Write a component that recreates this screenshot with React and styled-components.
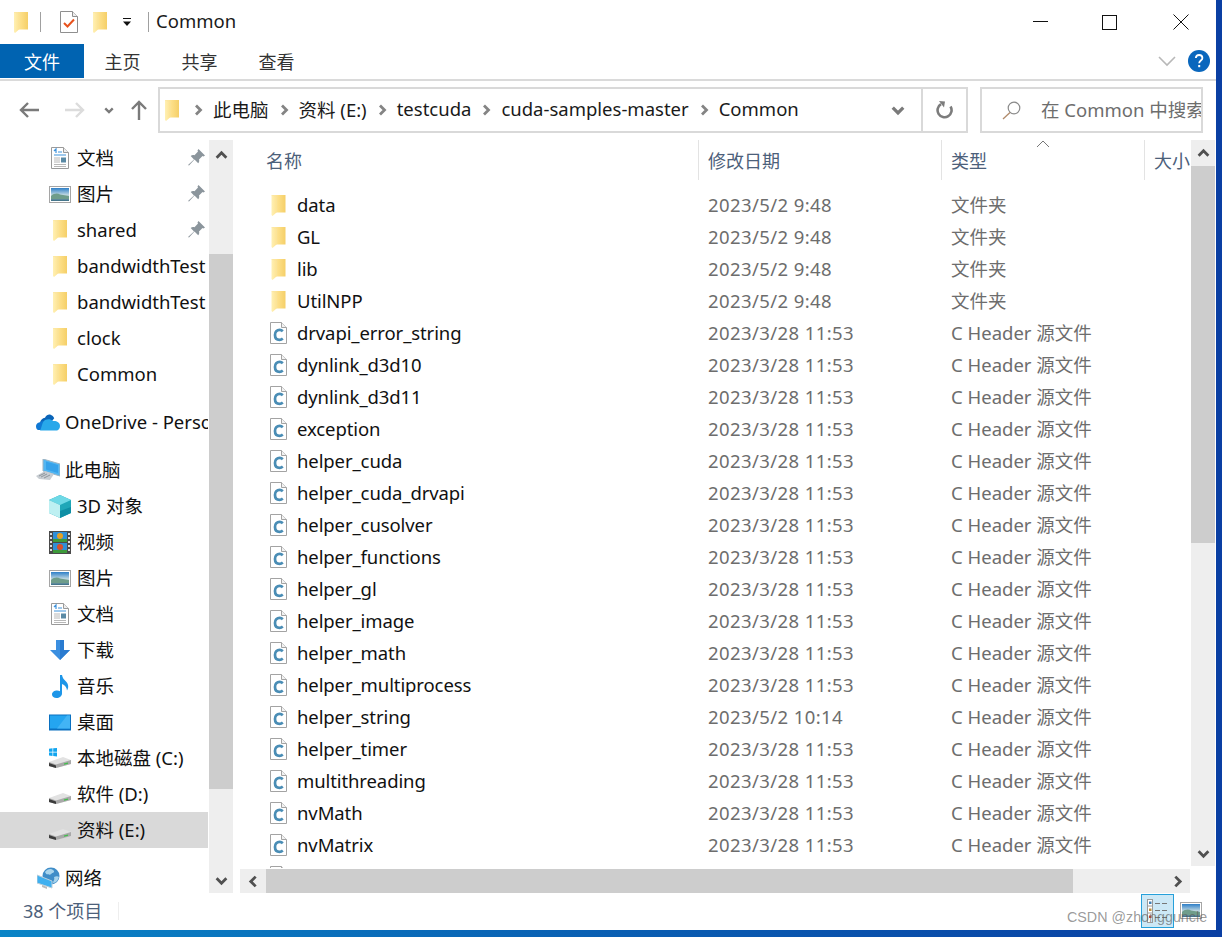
import React from "react";
import styled, { createGlobalStyle } from "styled-components";

const GlobalStyle = createGlobalStyle`
  html, body {
    margin: 0;
    padding: 0;
    background: #fff;
  }
  * {
    box-sizing: border-box;
  }
`;

const Screen = styled.div`
  position: relative;
  width: 1222px;
  height: 937px;
  overflow: hidden;
  display: flex;
  flex-direction: column;
  background: linear-gradient(90deg, #0a84c6 0%, #0a62b4 45%, #0a3fa3 100%);
  font-family: "Noto Sans", "Noto Sans CJK SC", sans-serif;
  font-size: 18.5px;
  color: #111;
`;

const Window = styled.div`
  width: 1216px;
  height: 930px;
  background: #fff;
  display: flex;
  flex-direction: column;
`;

const TitleBar = styled.div`
  height: 44px;
  flex: none;
  display: flex;
  align-items: center;
  padding-left: 14px;
`;

const TitleSep = styled.div`
  width: 1px;
  height: 20px;
  background: #a0a0a0;
  margin: 0 ${(p) => p.$right}px 0 ${(p) => p.$left}px;
`;

const Spacer = styled.span`
  flex: none;
  width: ${(p) => p.$w}px;
`;

const TitleText = styled.div`
  font-size: 18.5px;
  color: #1a1a1a;
  margin-bottom: 3px;
`;

const WinButtons = styled.div`
  margin-left: auto;
  display: flex;
  align-items: center;
`;

const WinButton = styled.div`
  width: ${(p) => p.$w}px;
  display: flex;
  justify-content: center;
  align-items: center;
`;

const RibbonTabs = styled.div`
  height: 37px;
  flex: none;
  display: flex;
  align-items: flex-start;
  border-bottom: 2px solid #dadada;
`;

const FileTab = styled.div`
  width: 84px;
  height: 34px;
  background: #0063b1;
  color: #fff;
  display: flex;
  align-items: center;
  justify-content: center;
  font-size: 18px;
`;

const Tab = styled.div`
  width: 77px;
  height: 34px;
  display: flex;
  align-items: center;
  justify-content: center;
  font-size: 18px;
  color: #333;
`;

const RibbonRight = styled.div`
  margin-left: auto;
  height: 34px;
  display: flex;
  align-items: center;
  gap: 12px;
  padding: 0 6px 0 0;
`;

const NavBar = styled.div`
  height: 46px;
  margin-top: 6px;
  flex: none;
  display: flex;
  align-items: center;
`;

const NavArrows = styled.div`
  width: 158px;
  flex: none;
  display: flex;
  align-items: center;
  padding-left: 19px;
`;

const AddressBox = styled.div`
  width: 810px;
  height: 46px;
  flex: none;
  border: 2px solid #d9d9d9;
  display: flex;
  align-items: center;
  padding-left: 5px;
`;

const Crumb = styled.span`
  color: #1a1a1a;
  white-space: nowrap;
  margin-bottom: 3px;
`;

const CrumbChevron = styled.span`
  display: flex;
  width: 30px;
  flex: none;
  justify-content: center;
  &:first-of-type {
    width: 34px;
    padding-left: 4px;
  }
`;

const AddressTail = styled.div`
  margin-left: auto;
  display: flex;
  height: 100%;
  align-items: center;
`;

const DropZone = styled.div`
  width: 46px;
  display: flex;
  justify-content: center;
`;

const RefreshZone = styled.div`
  width: 45px;
  height: 100%;
  border-left: 2px solid #d9d9d9;
  display: flex;
  align-items: center;
  justify-content: center;
`;

const SearchBox = styled.div`
  width: 223px;
  height: 46px;
  margin-left: 12px;
  border: 2px solid #d9d9d9;
  display: flex;
  align-items: center;
  padding-left: 20px;
  gap: 20px;
  overflow: hidden;
  white-space: nowrap;
  color: #6d6d6d;

  svg {
    flex: none;
  }
`;

const SearchHint = styled.span`
  margin-bottom: 2px;
  flex: none;
`;

const Body = styled.div`
  margin-top: 7px;
  height: 753px;
  flex: none;
  display: flex;
`;

const NavColumn = styled.div`
  width: 233px;
  flex: none;
  display: flex;
`;

const NavPane = styled.div`
  width: 208px;
  flex: none;
  overflow: hidden;
  margin-right: 1px;
`;

const NavRow = styled.div`
  position: relative;
  height: 36px;
  width: 208px;
  display: flex;
  align-items: center;
  white-space: nowrap;
  padding-left: ${(p) => (p.$top ? 36 : 49)}px;
  padding-bottom: 2px;
  gap: ${(p) => (p.$top ? 5 : 6)}px;
  margin-top: ${(p) => (p.$section ? 12 : 0)}px;
  background: ${(p) => (p.$selected ? "#d9d9d9" : "transparent")};
`;

const IconSlot = styled.span`
  width: ${(p) => (p.$top ? 24 : 22)}px;
  height: 24px;
  margin-top: 2px;
  flex: none;
  display: flex;
  align-items: center;
  justify-content: center;
`;

const PinSlot = styled.span`
  position: absolute;
  right: 3px;
  top: 9px;
  display: flex;
`;

const VScroll = styled.div`
  width: 24px;
  flex: none;
  height: ${(p) => p.$height}px;
  background: #eeeeee;
  display: flex;
  flex-direction: column;
`;

const ScrollThumb = styled.div`
  background: #cdcdcd;
  flex: none;
  height: ${(p) => p.$size}px;
`;

const ScrollEnd = styled.div`
  flex: none;
  height: ${(p) => p.$size}px;
  display: flex;
  align-items: ${(p) => p.$align || "center"};
  justify-content: center;
  padding: ${(p) => p.$pad || "0"};
`;

const ScrollGap = styled.div`
  flex: 1;
`;

const MainColumn = styled.div`
  margin-left: 7px;
  width: 976px;
  flex: none;
  display: flex;
  flex-direction: column;
`;

const MainTop = styled.div`
  display: flex;
  height: 729px;
  flex: none;
`;

const ListArea = styled.div`
  width: 951px;
  flex: none;
  height: 728px;
  overflow: hidden;
`;

const HeaderRow = styled.div`
  position: relative;
  height: 41px;
  margin-bottom: 8px;
  display: grid;
  grid-template-columns: 458px 243px 203px 46px;
  color: #4c607a;
  font-size: 18px;
`;

const HeaderCell = styled.div`
  height: 40px;
  display: flex;
  align-items: center;
  padding-left: ${(p) => p.$pad}px;
  overflow: hidden;
  white-space: nowrap;
  border-left: ${(p) => (p.$first ? "none" : "1px solid #e3e3e3")};
`;

const SortArrow = styled.span`
  position: absolute;
  left: 796px;
  top: 0;
  display: flex;
`;

const FileRow = styled.div`
  height: 32px;
  padding-bottom: 2px;
  display: grid;
  grid-template-columns: 458px 243px 250px;
  align-items: center;
  white-space: nowrap;
`;

const NameCell = styled.div`
  display: flex;
  align-items: center;
  padding-left: 30px;
  color: #111;
  letter-spacing: -0.1px;
`;

const FileIconSlot = styled.span`
  width: 17px;
  height: 24px;
  flex: none;
  margin: 2px 10px 0 0;
  display: flex;
  align-items: center;
  justify-content: center;
`;

const InfoCell = styled.div`
  color: #6d6d6d;
  padding-left: 10px;
  letter-spacing: ${(p) => (p.$date ? "0.41px" : "0")};
`;

const HScrollRow = styled.div`
  width: 950px;
  height: 24px;
  flex: none;
  background: #eeeeee;
  display: flex;
`;

const HEnd = styled.div`
  width: 26px;
  flex: none;
  display: flex;
  align-items: center;
  justify-content: center;
`;

const HThumb = styled.div`
  width: 807px;
  flex: none;
  background: #cdcdcd;
`;

const StatusBar = styled.div`
  flex: 1;
  display: flex;
  align-items: center;
  padding: 0 14px 2px 23px;
  color: #4c607a;
  font-size: 18px;
`;

const StatusText = styled.span`
  margin-bottom: 2px;
`;

const StatusSep = styled.div`
  width: 1px;
  height: 18px;
  background: #eeeeee;
  margin-left: 16px;
`;

const ViewButtons = styled.div`
  margin-left: auto;
  display: flex;
  align-items: center;
  gap: 6px;
`;

const ViewButton = styled.div`
  width: ${(p) => (p.$active ? 33 : 22)}px;
  height: 34px;
  display: flex;
  align-items: center;
  justify-content: center;
  border: ${(p) => (p.$active ? "1px solid #26a0da" : "none")};
  background: ${(p) => (p.$active ? "#cce8f6" : "transparent")};
`;

const Watermark = styled.div`
  position: absolute;
  left: 1067px;
  top: 909px;
  font-family: "Liberation Sans", Arial, sans-serif;
  font-size: 14.3px;
  color: rgba(90, 90, 90, 0.62);
  white-space: nowrap;
`;

const Folder = ({ w = 14, h = 21 }) => (
  <svg width={w} height={h} viewBox="0 0 14 21">
    <defs>
      <linearGradient id="fd" x1="0" x2="1" y1="0" y2="0">
        <stop offset="0" stopColor="#fff0b4" />
        <stop offset="0.45" stopColor="#fde08a" />
        <stop offset="1" stopColor="#f5cf68" />
      </linearGradient>
    </defs>
    <path d="M0 0h14v17.500H5L1 21l-1-1z" fill="url(#fd)" />
    <path d="M5 17.500V1.500L0 0" fill="none" stroke="#f9e3a0" strokeWidth=".6" />
  </svg>
);

const CFile = () => (
  <svg width="17" height="22" viewBox="0 0 17 22">
    <path d="M.5.5h11l5 5v16H.5z" fill="#fff" stroke="#a3a3a3" />
    <path d="M11.500.5v5h5" fill="#f2f2f2" stroke="#a3a3a3" />
    <path d="M12.800 9.200c-.9-.9-2-1.300-3.100-1.300-2.800 0-4.700 2-4.700 5s1.800 4.900 4.600 4.900c1.200 0 2.300-.4 3.200-1.200" fill="none" stroke="#4a8db5" strokeWidth="2.700" />
  </svg>
);

const CheckDoc = () => (
  <svg width="18" height="22" viewBox="0 0 18 22">
    <path d="M.5.5h12l5 5v16H.5z" fill="#fff" stroke="#8f8f8f" />
    <path d="M12.500.5v5h5" fill="#eee" stroke="#8f8f8f" />
    <path d="M4 12l3.500 3.500L14 8.500" fill="none" stroke="#e8521c" strokeWidth="2" />
  </svg>
);

const DocIcon = () => (
  <svg width="18" height="22" viewBox="0 0 18 22">
    <path d="M.5.5h12l5 5v16H.5z" fill="#fff" stroke="#9a9a9a" />
    <path d="M12.500.5v5h5" fill="#eee" stroke="#9a9a9a" />
    <path d="M3 4l2-2v4M7 5h4M3 8h12" stroke="#3f93dc" strokeWidth="1.200" fill="none" />
    <path d="M3 11h6M3 13h6M3 15h6M3 17.500h12M3 19.500h12" stroke="#b8b8b8" />
    <rect x="10" y="10.500" width="5" height="5" fill="#5a8aa5" />
  </svg>
);

const PictureIcon = () => (
  <svg width="22" height="17" viewBox="0 0 22 17">
    <defs>
      <linearGradient id="sky" x1="0" x2="0" y1="0" y2="1">
        <stop offset="0" stopColor="#2e7fc8" />
        <stop offset="0.55" stopColor="#c5dbe2" />
        <stop offset="1" stopColor="#3a6d84" />
      </linearGradient>
    </defs>
    <rect x=".5" y=".5" width="21" height="16" fill="#fff" stroke="#a5a5a5" />
    <rect x="2" y="2" width="18" height="13" fill="url(#sky)" />
    <path d="M2 10c3-3 7-3 9-1.500 3 .5 6 1 9 1.500v3H2z" fill="#6f9d8b" />
  </svg>
);

const Pin = () => (
  <svg width="17" height="17" viewBox="0 0 17 17">
    <path d="M10.500 0L17 6.500l-1.500 1-1-.5-3.500 3.500c.5 1.500.2 2.800-.8 3.800L6.500 10.500 1 16.500 0 16l6-5.500L2.700 7c1-1 2.300-1.300 3.800-.8L10 2.500 9.500 1.500z" fill="#8b959c" />
  </svg>
);

const OneDrive = () => (
  <svg width="24" height="17" viewBox="0 0 24 17">
    <path d="M4 9c.2-3 2.500-5 5-5.300C10.500 1 13 0 15 1c1.500.6 2.700 1.800 3.200 3.300L12 12z" fill="#0a64b8" />
    <path d="M3 8.500C1 9 0 10.500 0 12.500 0 14 .8 15.500 2 16h7l3-8-5-1z" fill="#0f78d4" />
    <path d="M9 6c3-1.500 6-1 8 1 3-.5 7 1 7 5 0 2.500-1.500 4-3 4.500H4C6 13 6 8 9 6z" fill="#28a8ea" />
  </svg>
);

const PcIcon = () => (
  <svg width="24" height="22" viewBox="0 0 24 22">
    <path d="M7 0l17 5v12L7 12z" fill="#52b6f2" stroke="#9fb4c2" />
    <path d="M10 2.500l12 3.600v8L10 10.500z" fill="#36a2ea" />
    <path d="M0 17l9-5 9 3-4 6-11-1z" fill="#c8cdd2" />
    <path d="M3 17l6-3M5 18l6-3M8 19l6-3" stroke="#8f969c" />
  </svg>
);

const CubeIcon = () => (
  <svg width="22" height="23" viewBox="0 0 22 23">
    <path d="M11 0l11 5v13l-11 5L0 18V5z" fill="#1fa7b8" />
    <path d="M11 0l11 5-11 5L0 5z" fill="#6ed9e6" />
    <path d="M0 5l11 5v13L0 18z" fill="#bdf0f2" />
    <path d="M11 16l11-4v6l-11 5z" fill="#0f8fa5" />
  </svg>
);

const VideoIcon = () => (
  <svg width="22" height="23" viewBox="0 0 22 23">
    <rect width="22" height="23" fill="#4a4a4a" />
    <path d="M1 2h2v2H1zM1 6h2v2H1zM1 10h2v2H1zM1 14h2v2H1zM1 18h2v2H1zM19 2h2v2h-2zM19 6h2v2h-2zM19 10h2v2h-2zM19 14h2v2h-2zM19 18h2v2h-2z" fill="#ddd" />
    <rect x="4" y="1" width="14" height="10" fill="#2f8fd8" />
    <rect x="4" y="12" width="14" height="10" fill="#2f8fd8" />
    <path d="M4 8h14v3H4zM4 19h14v3H4z" fill="#3d9a3a" />
    <circle cx="11" cy="5" r="3" fill="#e8a020" />
    <circle cx="11" cy="16" r="3" fill="#d8502a" />
  </svg>
);

const DownloadIcon = () => (
  <svg width="20" height="20" viewBox="0 0 20 20">
    <path d="M6 0h8v10h6L10 20 0 10h6z" fill="#3b8fe0" />
    <path d="M10 0h4v10h6L10 20z" fill="#2a7bd0" />
  </svg>
);

const MusicIcon = () => (
  <svg width="17" height="23" viewBox="0 0 17 23">
    <path d="M8 0h2c.5 3 2 4.500 4 6.500 2.500 2.500 3 6 1 9-.3-3-2-5.500-5-6.500v9.500c0 2.700-2.500 4.500-5.500 4.500C2 23 0 21.700 0 19.500 0 17 2.500 15.500 5 15.500c1.200 0 2.200.3 3 .8z" fill="#1e96e8" />
  </svg>
);

const DesktopIcon = () => (
  <svg width="22" height="17" viewBox="0 0 22 17">
    <rect width="22" height="16" y=".5" fill="#0a70c0" />
    <rect x="1" y="1.500" width="20" height="13" fill="#24a5f0" />
    <path d="M8 14.500L18 1.500h3v13z" fill="#42b4f5" />
  </svg>
);

const DriveIcon = ({ logo }) => (
  <svg width="22" height="20" viewBox="0 0 22 20">
    {logo && <path d="M0 .8l3.500-.5v3.500H0zM4.200.2L8 0v3.800H4.200zM0 4.500h3.500V8L0 7.500zM4.200 4.500H8V8.500L4.200 8z" fill="#12a5ef" />}
    <path d="M0 14l14-5 8 3v4l-15 4-7-2z" fill="#e2e2e2" />
    <path d="M0 14l7 2.500L22 12v4L7 20l-7-2z" fill="#a9a9a9" />
    <path d="M0 15l7 2.500V20l-7-2z" fill="#3c3c3c" />
    <path d="M15 16.200l4-1" stroke="#3fbf4a" strokeWidth="1.200" />
  </svg>
);

const NetworkIcon = () => (
  <svg width="23" height="23" viewBox="0 0 23 23">
    <circle cx="14" cy="9" r="8.500" fill="#3f8dc8" />
    <path d="M8 5c2-3 6-4 8-2 2 1 1 3-1 3-1 2-3 2-4 1-1 1-2 0-3-2zM17 10c2-1 4-1 5 0-1 3-3 6-6 6 0-2 2-3 1-6z" fill="#a8d4ec" />
    <path d="M0 8l15 6v7L0 16z" fill="#3fb0f0" stroke="#bcd0dc" />
    <path d="M5 18l5 2v2l-5-2z" fill="#bbb" />
  </svg>
);

const Chevron = ({ dir = "right", color = "#848484", size = 12, sw = 2.800 }) => {
  const paths = {
    right: "M4 1.500L8.500 6 4 10.500",
    left: "M8 1.500L3.500 6 8 10.500",
    up: "M1.500 8L6 3.500 10.500 8",
    down: "M1.500 4L6 8.500 10.500 4",
  };
  return (
    <svg width={size} height={size} viewBox="0 0 12 12">
      <path d={paths[dir]} fill="none" stroke={color} strokeWidth={sw} />
    </svg>
  );
};

const Arrow = ({ d, color }) => (
  <svg width="20" height="20" viewBox="0 0 20 20">
    <path d={d} fill="none" stroke={color} strokeWidth="2.400" />
  </svg>
);

const HelpIcon = () => (
  <svg width="22" height="22" viewBox="0 0 22 22">
    <circle cx="11" cy="11" r="11" fill="#0a67bd" />
    <path d="M7.800 8c.2-2 1.500-3 3.300-3 2 0 3.300 1.200 3.300 2.900 0 2.600-3.200 2.700-3.200 5.300" fill="none" stroke="#fff" strokeWidth="1.800" />
    <rect x="10.200" y="15" width="2" height="2.200" fill="#fff" />
  </svg>
);

const RefreshIcon = () => (
  <svg width="18" height="18" viewBox="0 0 18 18">
    <path d="M14.500 5.500A7 7 0 1 1 5 3.200" fill="none" stroke="#7c7c7c" strokeWidth="2.600" />
    <path d="M3 0l6 .5-1 6z" fill="#7c7c7c" />
  </svg>
);

const SearchIcon = () => (
  <svg width="19" height="19" viewBox="0 0 19 19">
    <circle cx="12" cy="7" r="5.800" fill="none" stroke="#8a8a8a" strokeWidth="1.200" />
    <path d="M8 11.500L1 18" stroke="#b08a6a" strokeWidth="1.300" />
  </svg>
);

const DetailsIcon = () => (
  <svg width="21" height="24" viewBox="0 0 21 24">
    <rect x=".5" y=".5" width="5" height="23" fill="#fff" stroke="#9a9a9a" />
    <path d="M1 7h4M1 14h4" stroke="#9a9a9a" />
    <rect x="2" y="2.500" width="2.500" height="2.500" fill="#3f7fb5" />
    <rect x="2" y="9.500" width="2.500" height="2.500" fill="#c08f3a" />
    <rect x="2" y="16.500" width="2.500" height="2.500" fill="#c8402a" />
    <path d="M8 4.500h5M15 4.500h5M8 11.500h5M15 11.500h5M8 18.500h5M15 18.500h5" stroke="#777" />
  </svg>
);

const navItems = [
  { icon: <DocIcon />, label: "文档", pin: true },
  { icon: <PictureIcon />, label: "图片", pin: true },
  { icon: <Folder />, label: "shared", pin: true },
  { icon: <Folder />, label: "bandwidthTest" },
  { icon: <Folder />, label: "bandwidthTest" },
  { icon: <Folder />, label: "clock" },
  { icon: <Folder />, label: "Common" },
  { icon: <OneDrive />, label: "OneDrive - Personal", top: true, section: true },
  { icon: <PcIcon />, label: "此电脑", top: true, section: true },
  { icon: <CubeIcon />, label: "3D 对象" },
  { icon: <VideoIcon />, label: "视频" },
  { icon: <PictureIcon />, label: "图片" },
  { icon: <DocIcon />, label: "文档" },
  { icon: <DownloadIcon />, label: "下载" },
  { icon: <MusicIcon />, label: "音乐" },
  { icon: <DesktopIcon />, label: "桌面" },
  { icon: <DriveIcon logo />, label: "本地磁盘 (C:)" },
  { icon: <DriveIcon />, label: "软件 (D:)" },
  { icon: <DriveIcon />, label: "资料 (E:)", selected: true },
  { icon: <NetworkIcon />, label: "网络", top: true, section: true },
];

const folderDate = "2023/5/2 9:48";
const headerDate = "2023/3/28 11:53";
const headerType = "C Header 源文件";

const files = [
  ["data", folderDate, "文件夹", true],
  ["GL", folderDate, "文件夹", true],
  ["lib", folderDate, "文件夹", true],
  ["UtilNPP", folderDate, "文件夹", true],
  ["drvapi_error_string", headerDate, headerType],
  ["dynlink_d3d10", headerDate, headerType],
  ["dynlink_d3d11", headerDate, headerType],
  ["exception", headerDate, headerType],
  ["helper_cuda", headerDate, headerType],
  ["helper_cuda_drvapi", headerDate, headerType],
  ["helper_cusolver", headerDate, headerType],
  ["helper_functions", headerDate, headerType],
  ["helper_gl", headerDate, headerType],
  ["helper_image", headerDate, headerType],
  ["helper_math", headerDate, headerType],
  ["helper_multiprocess", headerDate, headerType],
  ["helper_string", "2023/5/2 10:14", headerType],
  ["helper_timer", headerDate, headerType],
  ["multithreading", headerDate, headerType],
  ["nvMath", headerDate, headerType],
  ["nvMatrix", headerDate, headerType],
  // only the top of this icon shows above the scrollbar
  ["", "", ""],
];

const crumbs = ["此电脑", "资料 (E:)", "testcuda", "cuda-samples-master", "Common"];

function App() {
  return (
    <Screen>
      <GlobalStyle />
      <Window>
        <TitleBar>
          <Folder />
          <TitleSep $left={12} $right={19} />
          <CheckDoc />
          <Spacer $w={15} />
          <Folder />
          <Spacer $w={15} />
          <svg width="10" height="9" viewBox="0 0 10 9">
            <path d="M1 .5h8" stroke="#111" />
            <path d="M1 3.500h8L5 8z" fill="#111" />
          </svg>
          <TitleSep $left={16} $right={7} />
          <TitleText>Common</TitleText>
          <WinButtons>
            <WinButton $w={67}>
              <svg width="15" height="2"><rect width="15" height="1" fill="#111" /></svg>
            </WinButton>
            <WinButton $w={71}>
              <svg width="15" height="15"><rect x=".5" y=".5" width="14" height="14" fill="none" stroke="#111" /></svg>
            </WinButton>
            <WinButton $w={71}>
              <svg width="16" height="16"><path d="M.5.500l15 15M15.500.500l-15 15" stroke="#111" /></svg>
            </WinButton>
          </WinButtons>
        </TitleBar>

        <RibbonTabs>
          <FileTab>文件</FileTab>
          <Tab>主页</Tab>
          <Tab>共享</Tab>
          <Tab>查看</Tab>
          <RibbonRight>
            <svg width="18" height="11" viewBox="0 0 18 11">
              <path d="M1 1l8 8 8-8" fill="none" stroke="#b8b8b8" strokeWidth="1.600" />
            </svg>
            <HelpIcon />
          </RibbonRight>
        </RibbonTabs>

        <NavBar>
          <NavArrows>
            <Arrow color="#7a7a7a" d="M20 10H2M9 3l-7 7 7 7" />
            <Spacer $w={26} />
            <Arrow color="#dcdcdc" d="M0 10h18M11 3l7 7-7 7" />
            <Spacer $w={19} />
            <Chevron dir="down" color="#7a7a7a" size={10} />
            <Spacer $w={15} />
            <Arrow color="#7a7a7a" d="M10 20V2M3 9l7-7 7 7" />
          </NavArrows>
          <AddressBox>
            <Folder />
            {crumbs.map((label) => (
              <React.Fragment key={label}>
                <CrumbChevron><Chevron /></CrumbChevron>
                <Crumb>{label}</Crumb>
              </React.Fragment>
            ))}
            <AddressTail>
              <DropZone><Chevron dir="down" color="#7a7a7a" size={14} sw={2.800} /></DropZone>
              <RefreshZone><RefreshIcon /></RefreshZone>
            </AddressTail>
          </AddressBox>
          <SearchBox>
            <SearchIcon />
            <SearchHint>在 Common 中搜索</SearchHint>
          </SearchBox>
        </NavBar>

        <Body>
          <NavColumn>
            <NavPane>
              {navItems.map((item, i) => (
                <NavRow key={i} $top={item.top} $section={item.section} $selected={item.selected}>
                  <IconSlot $top={item.top}>{item.icon}</IconSlot>
                  {item.label}
                  {item.pin && <PinSlot><Pin /></PinSlot>}
                </NavRow>
              ))}
            </NavPane>
            <VScroll $height={753}>
              <ScrollEnd $size={114} $align="flex-start" $pad="9px 0 0">
                <Chevron dir="up" color="#505050" size={13} sw={2.600} />
              </ScrollEnd>
              <ScrollThumb $size={535} />
              <ScrollGap />
              <ScrollEnd $size={26}>
                <Chevron dir="down" color="#505050" size={13} sw={2.600} />
              </ScrollEnd>
            </VScroll>
          </NavColumn>

          <MainColumn>
            <MainTop>
              <ListArea>
                <HeaderRow>
                  <HeaderCell $first $pad={26}>名称</HeaderCell>
                  <HeaderCell $pad={9}>修改日期</HeaderCell>
                  <HeaderCell $pad={9}>类型</HeaderCell>
                  <HeaderCell $pad={9}>大小</HeaderCell>
                  <SortArrow>
                    <svg width="14" height="8" viewBox="0 0 14 8">
                      <path d="M1 7l6-6 6 6" fill="none" stroke="#777" />
                    </svg>
                  </SortArrow>
                </HeaderRow>
                {files.map(([name, date, type, isFolder], i) => (
                  <FileRow key={i}>
                    <NameCell>
                      <FileIconSlot>{isFolder ? <Folder w={15} /> : <CFile />}</FileIconSlot>
                      {name}
                    </NameCell>
                    <InfoCell $date>{date}</InfoCell>
                    <InfoCell>{type}</InfoCell>
                  </FileRow>
                ))}
              </ListArea>
              <VScroll $height={726}>
                <ScrollEnd $size={26}>
                  <Chevron dir="up" color="#505050" size={13} sw={2.600} />
                </ScrollEnd>
                <ScrollThumb $size={377} />
                <ScrollGap />
                <ScrollEnd $size={26}>
                  <Chevron dir="down" color="#505050" size={13} sw={2.600} />
                </ScrollEnd>
              </VScroll>
            </MainTop>
            <HScrollRow>
              <HEnd><Chevron dir="left" color="#505050" size={13} sw={2.600} /></HEnd>
              <HThumb />
              <ScrollGap />
              <HEnd><Chevron dir="right" color="#505050" size={13} sw={2.600} /></HEnd>
            </HScrollRow>
          </MainColumn>
        </Body>

        <StatusBar>
          <StatusText>38 个项目</StatusText>
          <StatusSep />
          <ViewButtons>
            <ViewButton $active><DetailsIcon /></ViewButton>
            <ViewButton><PictureIcon /></ViewButton>
          </ViewButtons>
        </StatusBar>
      </Window>
      <Watermark>CSDN @zhongguncle</Watermark>
    </Screen>
  );
}

export default App;
